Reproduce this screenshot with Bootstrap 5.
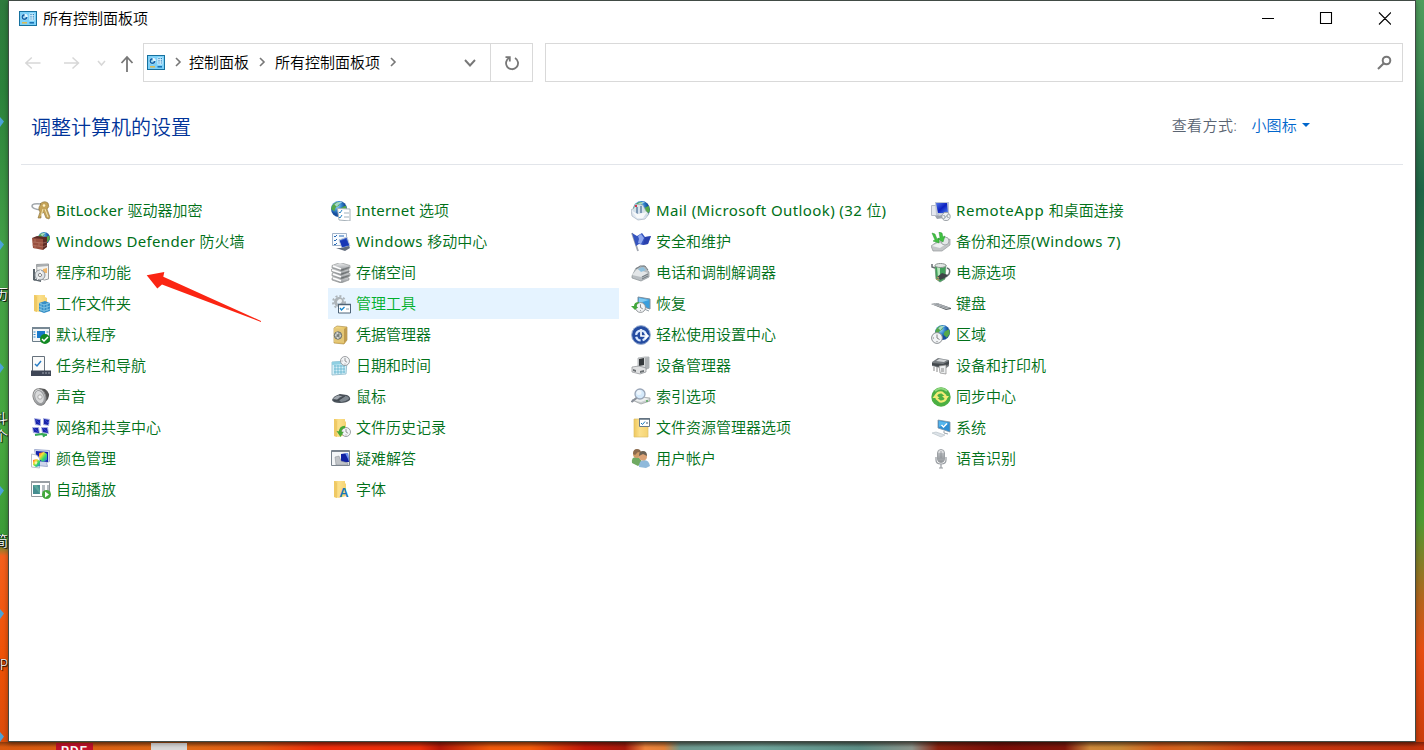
<!DOCTYPE html>
<html lang="zh-CN">
<head>
<meta charset="utf-8">
<title>所有控制面板项</title>
<link href="https://cdn.jsdelivr.net/npm/bootstrap@5.3.0/dist/css/bootstrap.min.css" rel="stylesheet">
<style>
html,body{height:750px;overflow:hidden}
body{font:350 15px/20px "Noto Sans","Noto Sans CJK SC",sans-serif;color:#000;background:linear-gradient(#2f7b3d 0,#2c823b 90px,#43a047 250px,#47a83f 440px,#3b9b38 542px,#f4601c 556px,#ee5206 660px,#d94c0b 750px)}
svg{display:block;flex:none}
.desk-right{left:1415px;top:0;width:9px;height:750px;background:linear-gradient(#4f9d5c 0,#3f8c54 70px,#1f6547 190px,#347b3d 330px,#4d9b32 520px,#b5651c 600px,#e74e12 650px,#c83c0a 750px)}
.desk-bottom{left:0;top:742px;width:1424px;height:8px;background:linear-gradient(rgba(40,20,10,.45),transparent 5px),linear-gradient(90deg,#d9590f 0,#e06a17 190px,#e85a12 260px,#f02c0a 320px,#ee3009 420px,#b51808 440px,#f25b0b 490px,#f45c0a 530px,#c41809 585px,#a61a0c 625px,#f0853c 645px,#e4823a 664px,#6f9a90 680px,#6fa59b 760px,#5d8f86 860px,#8c958c 912px,#8c2310 938px,#7c0e08 1000px,#80160a 1065px,#cf8b3c 1090px,#c98a38 1120px,#d85e1d 1160px,#d2661d 1190px,#d03d12 1250px,#c02f0b 1424px)}
.pdf-tile{left:56px;top:743px;width:37px;height:7px;background:#c3122b;color:#fff;font:700 12px/17px "Liberation Sans",sans-serif;overflow:hidden;text-align:center;letter-spacing:1px}
.doc-tile{left:151px;top:743px;width:36px;height:7px;background:#d9d9d8}
.desk-label{color:#fff;text-shadow:1px 1px 1px #000,-1px 0 1px #000;font-size:14px;line-height:16px;white-space:nowrap;width:8px;overflow:hidden;direction:rtl}
.shortcut{left:0;width:4px;height:10px;background:#4ba3d8;clip-path:polygon(0 0,100% 45%,0 100%)}
.win{margin-left:8px;width:1408px;height:742px;background:#fff;border:1px solid #414b45;box-shadow:0 2px 5px rgba(0,0,0,.35)}
.title-row{height:35px;padding:0 24px 0 10px}
.nav-row{height:51px;padding:7px 12px 0 16px}
.addr,.find{height:39px;border:1px solid #d9d9d9}
.addr{width:390px}
.addr>span{margin-top:-2px}
.refresh{width:42px;height:37px;border-left:1px solid #d9d9d9}
.head-row{height:78px;padding:0 93px 0 10px;border-bottom:1px solid #e2e5ea;margin:0 12px}
h1{font:350 20px/26px "Noto Sans CJK SC",sans-serif;color:#039}
.by{color:#5a6472}.pick{color:#06c}
.panel{margin:30px 0 0 19px}
.colm{width:300px}
.cp{height:31px;width:291px;padding-left:3px;gap:5px;color:#007018;text-decoration:none;white-space:nowrap}
.cp svg{width:20px;height:20px}
.cp>span{margin-top:-2px}
.cp>span>span{font-weight:400}
.cp.on{background:#e5f3ff;color:#00b02c}
.ls-1{letter-spacing:.18px}.ls-2{letter-spacing:.32px}.ls-3{letter-spacing:.4px}.ls-4{letter-spacing:.6px}
.pointer{left:146px;top:270px}
</style>
</head>
<body class="position-relative">
<svg width="0" height="0" class="position-absolute"><defs>
<linearGradient id="gold" x2="1" y2="1"><stop stop-color="#f7e08f"/><stop offset="1" stop-color="#d9a93d"/></linearGradient>
<linearGradient id="fold" x2="1"><stop stop-color="#efc75c"/><stop offset=".4" stop-color="#fbe08c"/><stop offset="1" stop-color="#f5d372"/></linearGradient>
<linearGradient id="steel" x2="0" y2="1"><stop stop-color="#f0f1f2"/><stop offset="1" stop-color="#8c9094"/></linearGradient>
<linearGradient id="screen" x2="1" y2="1"><stop stop-color="#5579e8"/><stop offset=".5" stop-color="#0b1fc0"/><stop offset="1" stop-color="#4f7ff0"/></linearGradient>
<radialGradient id="globe" cx=".35" cy=".3"><stop stop-color="#a8dcf8"/><stop offset=".6" stop-color="#3588cf"/><stop offset="1" stop-color="#164f9e"/></radialGradient>
<linearGradient id="rain" x2="1" y2="1"><stop stop-color="#f33"/><stop offset=".3" stop-color="#fd3"/><stop offset=".6" stop-color="#3d6"/><stop offset="1" stop-color="#36f"/></linearGradient>
<symbol id="panel" viewBox="0 0 18 15"><path fill="#16719f" d="M0 0h18v15H0z"/><path fill="#7cd0f8" d="M1 1h16v13H1z"/><circle cx="5.500" cy="6" r="3.300" fill="#e4f6ff"/><path fill="#1565a8" d="M5.500 6V3A3 3 0 1 0 8.500 6z"/><circle cx="5.300" cy="6.200" r="1.300" fill="#a9dcf5"/><path fill="#e4f6ff" d="M10.500 2.500h5v7h-5z"/><path stroke="#1478ba" stroke-width="1.200" stroke-dasharray="1.200 1" d="M12 3v6.500M14.300 3v6.500"/><path stroke="#e0b94e" stroke-width="1.500" d="M3 11.800h5"/><path stroke="#176db0" stroke-width="1.500" d="M10.500 11.800h4.500"/></symbol>
<symbol id="gl" viewBox="0 0 14 14"><circle cx="7" cy="7" r="7" fill="url(#globe)"/><path fill="#55a84a" d="M1 4q3-4 7-3L7 4 4 6 3 9 0 7zm8 2 4-2 1 4-3 4-3-3z"/><path fill="#c9ecff" opacity=".7" d="M3 3q3-3 7-2Q7 2 5 5z"/></symbol>
<symbol id="clk" viewBox="0 0 12 12"><circle cx="6" cy="6" r="5.400" fill="#f2f4f6" stroke="#8b8f93"/><path d="M6 2.500V6l2.500 1.500M2 6h1M6 9v1" stroke="#666" stroke-width=".8" fill="none"/></symbol>
</defs></svg>

<div class="position-absolute desk-right"></div>
<div class="position-absolute desk-bottom"></div>
<div class="position-absolute pdf-tile">PDF</div>
<div class="position-absolute doc-tile"></div>
<i class="position-absolute shortcut" style="top:117px"></i><i class="position-absolute shortcut" style="top:240px"></i><i class="position-absolute shortcut" style="top:363px"></i><i class="position-absolute shortcut" style="top:486px"></i><i class="position-absolute shortcut" style="top:609px"></i><i class="position-absolute shortcut" style="top:732px"></i>
<div class="position-absolute desk-label" style="top:286px">历</div>
<div class="position-absolute desk-label" style="top:410px">斗</div>
<div class="position-absolute desk-label" style="top:428px">个</div>
<div class="position-absolute desk-label" style="top:533px">简</div>
<div class="position-absolute desk-label" style="top:657px">P</div>

<main class="win position-relative">
<header class="title-row d-flex align-items-center">
<svg width="18" height="15"><use href="#panel"/></svg><span class="me-auto text-nowrap" style="margin:-1px 0 0 6px">所有控制面板项</span>
<svg width="129" height="13" fill="none" stroke="#000" stroke-width="1.100"><path d="M0 6.500h12M58.500.5h11v11h-11zM117 .5l12 12M129 .5l-12 12"/></svg>
</header>
<nav class="nav-row d-flex align-items-start">
<svg width="118" height="39" fill="none" stroke-width="1.500"><g stroke="#d7d7d7"><path d="M15.500 20H.8m6-5.500-6 5.500 6 5.500M39 20h14.500m-6-5.500 6 5.500-6 5.500"/><path d="m73 18 3.500 4 3.500-4"/></g><path stroke="#777" stroke-width="1.800" d="M102 29V14m-5.500 6 5.500-6 5.500 6"/></svg>
<div class="addr d-flex align-items-center">
<svg width="18" height="15" style="margin:0 1px 1px 3px"><use href="#panel"/></svg>
<svg width="23" height="12" fill="none" stroke="#777" stroke-width="1.600" style="margin-bottom:2px"><path d="m10 2 4 4-4 4"/></svg><span>控制面板</span>
<svg width="26" height="12" fill="none" stroke="#777" stroke-width="1.600" style="margin-bottom:2px"><path d="m11 2 4 4-4 4"/></svg><span>所有控制面板项</span>
<svg width="26" height="12" fill="none" stroke="#777" stroke-width="1.600" style="margin-bottom:2px"><path d="m11 2 4 4-4 4"/></svg>
<svg class="ms-auto" style="margin-right:14px" width="12" height="8" fill="none" stroke="#777" stroke-width="1.900"><path d="m1 1 5 5.500L11 1"/></svg>
<div class="refresh d-flex align-items-center justify-content-center"><svg width="16" height="16" fill="none" stroke="#777" stroke-width="1.800"><path d="M5.500 2.800A6 6 0 1 0 11 3"/><path d="M1.500 2.200h4.300v4.300"/></svg></div>
</div>
<div class="find flex-grow-1 d-flex align-items-center justify-content-end" style="margin-left:12px"><svg width="15" height="15" fill="none" stroke="#777" stroke-width="2" style="margin-right:10px"><circle cx="9.500" cy="5.500" r="3.800"/><path d="M6.800 8.200 1 14"/></svg></div>
</nav>
<div class="head-row d-flex align-items-center">
<h1 class="m-0 me-auto" style="padding-top:2px">调整计算机的设置</h1><span class="by" style="margin-top:-2px;letter-spacing:.4px">查看方式:</span><span class="pick" style="margin:-2px 0 0 14px;letter-spacing:.2px">小图标</span><svg width="8" height="4" style="margin:-1px 0 0 5px" fill="#06c"><path d="M0 0h8L4 4z"/></svg>
</div>
<section class="panel d-flex">
<div class="colm">
<a class="cp d-flex align-items-center"><svg viewBox="0 0 20 20"><path d="M10 3Q1 2 1 5t9 4" fill="none" stroke="#a4a9ad" stroke-width="1.600"/><path fill="#c5a358" stroke="#86703c" stroke-width=".6" d="M9 3q4-4 8-1 2 4-1 6l3 8-1 2-3-1-2-5-1-1-2 3 0 3-3 0 2-6-1-2q-1-3 2-6z"/><circle cx="13" cy="4.500" r="1.300" fill="#fff3c8"/><path d="m12 8-2 7m4-7 3 8" stroke="#f1e3b0"/></svg><span><span class="ls-1">BitLocker </span>驱动器加密</span></a>
<a class="cp d-flex align-items-center"><svg viewBox="0 0 20 20"><use href="#gl" x="7" y="0" width="12" height="12"/><path fill="#99503f" d="m1 6 11 0v12L2 16z"/><path fill="#5d2b25" d="m12 7 4-2v10l-4 3zM1 6l5-2 10 1-4 2z"/><path d="m1 10 11 1 4-1M1 13l11 2 4-2M4 7v3m4 1v3m-4 0v3" fill="none" stroke="#c08a78" stroke-width=".5"/></svg><span><span class="ls-2">Windows Defender </span>防火墙</span></a>
<a class="cp d-flex align-items-center"><svg viewBox="0 0 20 20"><path fill="#f2f2f0" stroke="#999c9e" d="M5.500 1.500 17.500 1v15l-4 1-7-2z"/><path fill="#a9adb0" d="m6 2 11-1v2L6 4z"/><path fill="#efb66a" d="m12 6 4-1v5h-4z"/><path fill="#59636a" d="m2 6 2 0v12l-2-1zm0 9 8 2v2l-8-2z"/><circle cx="9" cy="12" r="5" fill="#dfe3e6" stroke="#8c9297"/><circle cx="9" cy="12" r="1.600" fill="#fff" stroke="#888"/><path d="m9 7 2 4m-5 6 2-3" stroke="#fff"/></svg><span>程序和功能</span></a>
<a class="cp d-flex align-items-center"><svg viewBox="0 0 20 20"><path fill="url(#fold)" d="M3 1h11v2l2 1v12l-7 2-6-1z"/><path fill="#efc964" d="m3 1 3 2v15l-3-1z"/><path fill="#368fc8" d="m8 9 6-2 5 2v8l-6 2-5-2z"/><path d="m8 9 5 2 6-2M8 12l5 2 6-2M8 15l5 2 6-2m-6-5v8m-3-9v8m6-8v8" fill="none" stroke="#9fdaef" stroke-width=".6"/></svg><span>工作文件夹</span></a>
<a class="cp d-flex align-items-center"><svg viewBox="0 0 20 20"><path fill="#f4f6f7" stroke="#6b7d89" d="M1.500 2.500h17v14h-17z"/><path fill="#778894" d="M1 2h18v2H1z"/><path fill="#1979ca" d="M6 6h8v7H6z"/><path stroke="#328dca" d="M2.500 7h2m-2 2.500h2m-2 2.500h2M15.500 7h2"/><circle cx="14" cy="14" r="5" fill="#128a23"/><path d="m11 14 2 2 4-4" fill="none" stroke="#fff" stroke-width="1.500"/></svg><span>默认程序</span></a>
<a class="cp d-flex align-items-center"><svg viewBox="0 0 20 20"><path fill="#fafafa" stroke="#66717c" d="M1.500.5h12v16h-12z"/><path d="m4 8 2 2 4-5" fill="none" stroke="#287cc4" stroke-width="1.500"/><path fill="#3e4656" d="M0 14.500h20V20H0z"/><path stroke="#9da4af" stroke-width="1.200" stroke-dasharray="2 1" d="M11 17h8"/></svg><span>任务栏和导航</span></a>
<a class="cp d-flex align-items-center"><svg viewBox="0 0 20 20"><path fill="#555" d="m8 1 6 1q6 4 3 10l-5 6z"/><ellipse cx="8.500" cy="10" rx="6.300" ry="8.500" transform="rotate(-18 8.500 10)" fill="url(#steel)" stroke="#888"/><ellipse cx="8.500" cy="10" rx="4.600" ry="6.700" transform="rotate(-18 8.500 10)" fill="#d9dadb" stroke="#9a9c9e"/><circle cx="9" cy="10" r="2.200" fill="#f2f2f2" stroke="#aaa"/></svg><span>声音</span></a>
<a class="cp d-flex align-items-center"><svg viewBox="0 0 20 20"><path fill="#a9afe2" d="m3 0 7 1 0 7-6-1zm9 0 7 1-1 7-6-1zM1 9l7 0 1 7-7-1zm9 0 7 0 1 7-7-1z"/><path fill="#1924a9" d="m4 1 5 1 0 5-4-1zm9 0 5 1-1 5-4-1zM2 10l5 0 1 5-5-1zm9 0 5 0 1 5-5-1z"/><path stroke="#35a956" stroke-width="2" fill="none" d="m4 17 7-1 5 1m-4-1 1 3"/><path d="m5 2 4 4m5-4 4 4M3 10l4 4m5-4 4 4" stroke="#3548d6" stroke-width=".8"/></svg><span>网络和共享中心</span></a>
<a class="cp d-flex align-items-center"><svg viewBox="0 0 20 20"><path fill="#ced4ec" stroke="#a3aed0" d="m3.500.5 15 1v11l-3 1 1 4-10-1z"/><path fill="#1524ab" d="m5 2 12 1v10L5 12z"/><path fill="url(#rain)" d="m8 4 5-1 3 2v6l-4 2-4-3z"/><path fill="#fff" stroke="#b9c1cb" d="m.5 5 5 1 3 3v10l-8-1z"/><path fill="url(#rain)" d="m2 11 4-1 3 2v5l-4 1-3-2z"/><path fill="#f7f0ae" d="m5 12 1.500 1.500L5 16l-1.500-2z"/></svg><span>颜色管理</span></a>
<a class="cp d-flex align-items-center"><svg viewBox="0 0 20 20"><path fill="#fff" stroke="#90969a" d="M.5 1.500h18v15H.5z"/><path fill="#999fa4" d="M0 1h19v2H0z"/><path fill="#468d90" d="M2 5h7v9H2z"/><path fill="#68b9a4" d="m2 5 4 0 3 6v3z" opacity=".6"/><path fill="#b6bdc2" d="M11 5h3v8h-3zm5 0h2v8h-2z"/><circle cx="15.500" cy="14.500" r="4.500" fill="#43a83c"/><path fill="#fff" d="m14 11.500 4 3-4 3z"/></svg><span>自动播放</span></a>
</div>
<div class="colm">
<a class="cp d-flex align-items-center"><svg viewBox="0 0 20 20"><use href="#gl" width="16" height="16"/><path fill="#fff" stroke="#a7b1b9" d="M6.500 7.500 19 8v12l-11-1z"/><path stroke="#2784c4" fill="none" d="m8 11 1 1 2-3m-3 7 1 1 2-3"/><path stroke="#9fb1bd" d="M13 12h5m-5 4h5"/></svg><span><span class="ls-1">Internet </span>选项</span></a>
<a class="cp d-flex align-items-center"><svg viewBox="0 0 20 20"><path fill="#f7fbff" stroke="#a1b3c9" d="M1.500 1.500h14v12h-14z"/><path fill="none" stroke="#2768b4" d="m3 4 1 1 2-2m2 1h5M3 8l1 1 2-2m2 1h3m-8 4 1 1 2-2"/><path fill="#3c64c9" stroke="#c6cfdd" d="m8 8 8-3 3 9-8 2z"/><path fill="#1837b5" d="m9 9 6-2 3 6-7 2z"/><path fill="#606b7c" d="m5 16 5 0 8-2 1 2-5 3z"/></svg><span><span class="ls-3">Windows </span>移动中心</span></a>
<a class="cp d-flex align-items-center"><svg viewBox="0 0 20 20" stroke="#888b8c" stroke-width=".6"><path fill="url(#steel)" d="m1 15 8-3 9 3v2l-8 3-9-3z"/><path fill="url(#steel)" d="m1 10.500 8-3 10 3v2.500l-8 3-10-3z"/><path fill="url(#steel)" d="m0 6.500 9-3 9 3V9l-8 3-9-3z"/><path fill="url(#steel)" d="m1 2.500 8-3 10 3V5l-8 3-10-3z"/><path stroke="#fff" stroke-width="1.500" d="m2 3 8 3m-9 1 9 3m-8 1 8 3m-8 1 8 3"/><path fill="#5f6467" d="M10 6.500 18 4v1l-8 3zm0 4L18 8v1l-8 3zm0 4 8-2.500v1L10 16z"/></svg><span>存储空间</span></a>
<a class="cp on d-flex align-items-center"><svg viewBox="0 0 20 20"><g fill="none" stroke="#adb4b9"><circle cx="8" cy="8" r="3.500" stroke-width="3"/><circle cx="8" cy="8" r="6" stroke-width="2" stroke-dasharray="2 2"/></g><circle cx="9" cy="7" r="2" fill="#eef2f5"/><path fill="#fff" stroke="#4e6478" d="M7.500 10.500h12v8.500h-12z"/><path stroke="#4f6375" stroke-width="1.500" d="M7 10.500h13"/><path d="m9 14 1.500 2 3-3" fill="none" stroke="#1887cd" stroke-width="1.300"/><path stroke="#8ea4b3" d="M15 15h3"/></svg><span>管理工具</span></a>
<a class="cp d-flex align-items-center"><svg viewBox="0 0 20 20"><path fill="url(#gold)" stroke="#b0924f" stroke-width=".7" d="m3 3 3-2 10 1v13l-3 4-10-1z"/><path fill="#e4c777" d="m3 3 10 1v14L3 17z"/><circle cx="7" cy="10.500" r="3.700" fill="#a9ada5" stroke="#6b706d"/><path stroke="#eee" d="m4 10 6 1m-4-4 1 7"/><circle cx="7" cy="10.500" r="1.500" fill="#777c78"/><path fill="#c09c50" d="m13 4 3-2v13l-3 3z"/></svg><span>凭据管理器</span></a>
<a class="cp d-flex align-items-center"><svg viewBox="0 0 20 20"><path fill="#d5eff8" stroke="#9cc4d3" d="m1 6 15-1-1 13-14 1z"/><path fill="#8fcfe2" d="m1 6 13-1v3L1 9z"/><path stroke="#58afca" stroke-width=".7" d="M3 10h11M3 13h11M3 16h11M4 9v9m3-9v9m3-9v9m3-9v8"/><use href="#clk" x="9" y="0" width="10" height="10"/></svg><span>日期和时间</span></a>
<a class="cp d-flex align-items-center"><svg viewBox="0 0 20 20"><path fill="#4b535b" d="M1 13q1-4 8-6l7 1q4 2 3 5-3 3-10 3-7 0-8-3z"/><path fill="#a0a7ae" d="M2 12q2-3 7-4l3 1q-4 1-6 4z"/><path fill="#7f8890" d="m8 13 6-4q4 0 4 3-4 3-8 3z"/><path stroke="#333940" stroke-width=".7" fill="none" d="m3 13 5 0 6-4m-6-1 4 1"/></svg><span>鼠标</span></a>
<a class="cp d-flex align-items-center"><svg viewBox="0 0 20 20"><path fill="url(#fold)" d="M3 1h11v2l1 1v13l-7 2-5-1z"/><path fill="#efc964" d="m3 1 3 2v16l-3-1z"/><use href="#clk" x="10" y="9" width="10" height="10"/><path fill="none" stroke="#47a937" stroke-width="2.500" d="M14 9q-5 0-5 6"/><path fill="#47a937" d="m5.500 13 7 1-3 5z"/></svg><span>文件历史记录</span></a>
<a class="cp d-flex align-items-center"><svg viewBox="0 0 20 20"><path fill="#f3f5f7" stroke="#78828d" d="M.5 1.500h18v15H.5z"/><path stroke="#7c858f" d="M1 2.500h17"/><path fill="#1021a3" d="m10 5 7-1 1 9-8 1z"/><path fill="#6b92ef" d="m14 4 3 0 1 8z"/><path fill="#c0c3c7" stroke="#858a90" stroke-width=".5" d="m4 8 4-1 2 5 7 2v2H5z"/></svg><span>疑难解答</span></a>
<a class="cp d-flex align-items-center"><svg viewBox="0 0 20 20"><path fill="url(#fold)" d="M3 1h11v2l1 1v12l-7 2-5-1z"/><path fill="#efc964" d="m3 1 3 2v15l-3-1z"/><text x="8.300" y="17" font-family="Liberation Sans" font-size="13" font-weight="bold" fill="#1778b6">A</text></svg><span>字体</span></a>
</div>
<div class="colm">
<a class="cp d-flex align-items-center"><svg viewBox="0 0 20 20"><use href="#gl" x="2" width="17" height="17"/><path fill="#e0e8f1" stroke="#8c9cac" stroke-width=".6" d="m0 9 3-2 1-4 8 1 3 6 3 3-4 5-7 1-6-4z" opacity=".92"/><path fill="#7e99b5" d="M5 6h2v7H5zm4-1h2v7H9z"/><path fill="#f7f9fa" d="m1 10 6 3 9-2-4 6-6 0z"/><path fill="#d2364f" d="M4 4h2v2H4z"/></svg><span><span class="ls-3">Mail (Microsoft Outlook) (32 </span>位<span>)</span></span></a>
<a class="cp d-flex align-items-center"><svg viewBox="0 0 20 20"><path d="m1 1 6 18" stroke="#a1a6b0" stroke-width="1.800"/><path fill="#3554bf" d="m1 1 5 3 5-3 3 4 6-1-3 8-5 1-4-1-3 2z"/><path fill="#90a7ee" d="m7 4 3-2 3 4-3 6-3-1 1-4z"/><path fill="#2336a3" d="m14 5 6-1-3 8-5 1z" opacity=".6"/></svg><span>安全和维护</span></a>
<a class="cp d-flex align-items-center"><svg viewBox="0 0 20 20"><path fill="#b8bdc1" stroke="#8a9094" stroke-width=".7" d="m1 13 4-8 8-2 5 6v5l-8 4-9-3z"/><path fill="#e3e6e8" d="m1 12 5-6 11 4-7 4z"/><path fill="#8fc1de" d="m7 6 5-2 3 3-5 2z"/><path fill="none" stroke="#6f787e" d="m5 6 4-3 5 0 3 4m-6 7 6-3m-6 5 6-3"/></svg><span>电话和调制解调器</span></a>
<a class="cp d-flex align-items-center"><svg viewBox="0 0 20 20"><path fill="#3b9fdd" stroke="#7f909f" d="m7 3 12 2v10L7 11z"/><path fill="#81caf2" d="m8 4 10 2-10 3z"/><path stroke="#919ca4" d="m13 15 5 2"/><use href="#clk" x="4" y="8" width="11" height="11"/><path fill="#42a83b" d="M8 8Q3 8 3 12H0l4 4 3-3H6q-1-3 2-4z"/></svg><span>恢复</span></a>
<a class="cp d-flex align-items-center"><svg viewBox="0 0 20 20"><circle cx="10" cy="10" r="9.400" fill="#254ca1" stroke="#9fb3d4"/><circle cx="10" cy="10.500" r="5" fill="none" stroke="#d9e9ff" stroke-width="2.200" stroke-dasharray="6 2"/><path stroke="#fff" stroke-width="1.700" fill="none" d="M10 4v7h7m-3-3 3 3-3 3"/></svg><span>轻松使用设置中心</span></a>
<a class="cp d-flex align-items-center"><svg viewBox="0 0 20 20"><path fill="#d6d8d9" stroke="#9a9da0" stroke-width=".7" d="m7 2 7-1 4 0v11l-7 3-4-3z"/><path fill="#34383b" d="m8 3 5-1v7l-5 1z"/><path fill="#aeb2b5" d="m14 2 4-1v11l-4 2z"/><path fill="#e0e1e2" stroke="#898d90" stroke-width=".7" d="m1 11 7-1 7 2v4l-6 2-8-2z"/><path fill="#6a6f72" d="m2 13 3 1v2l-3-1zm7 2 4-1v2l-4 1z"/></svg><span>设备管理器</span></a>
<a class="cp d-flex align-items-center"><svg viewBox="0 0 20 20"><path fill="#c9cecf" stroke="#999d9f" stroke-width=".7" d="m1 13 10-3 8 1v3l-9 3z"/><path fill="#edf0f0" d="m1 13 9-3 8 2-8 3z"/><circle cx="9" cy="7" r="5" fill="#d4e9fa" stroke="#9aa6b8" stroke-width="1.300"/><path d="m5.500 11-5 4" stroke="#898f99" stroke-width="2.200"/><circle cx="8" cy="5.500" r="2.500" fill="#fff" opacity=".6"/><circle cx="16" cy="14" r="1" fill="#55a858"/></svg><span>索引选项</span></a>
<a class="cp d-flex align-items-center"><svg viewBox="0 0 20 20"><path fill="url(#fold)" stroke="#dcc06a" stroke-width=".7" d="M3 1h13l1 2v16H3z"/><path fill="#fff" stroke="#687a88" d="M8.500.5h10v8h-10z"/><path stroke="#60717f" stroke-width="1.500" d="M8 1h11"/><path d="m10 5 1.500 1.500L14 3.500" stroke="#1778bb" fill="none"/><path d="M15 5h2" stroke="#456"/></svg><span>文件资源管理器选项</span></a>
<a class="cp d-flex align-items-center"><svg viewBox="0 0 20 20"><path fill="#6fa961" d="M1 14q-1-6 4-6t6 6l-4 3z"/><circle cx="6" cy="5" r="4" fill="#cf9c68"/><path fill="#8b6a4c" d="M2 5q0-5 4-5t4 4l-3-1-3 3z"/><path fill="#8fb9db" d="M8 18q0-7 5-7t6 6l-4 2z"/><circle cx="12" cy="7.500" r="4" fill="#dba276"/><path fill="#6b6052" d="M8 7q0-5 4-5t4 5l-4-2z"/></svg><span>用户帐户</span></a>
</div>
<div class="colm">
<a class="cp d-flex align-items-center"><svg viewBox="0 0 20 20"><path fill="#e5e8ef" stroke="#b4bac7" d="M.5 4.500h7v10h-7z"/><path fill="#bdc5d4" d="m4 1 14 0 0 12-13 1z"/><path fill="url(#screen)" d="m5 2 11 0 1 10-10 0z"/><path fill="#9ca3ad" d="m4 15 7-1 2 3-7 1z"/><circle cx="15" cy="15.500" r="4.200" fill="#eef0f2" stroke="#9a9fa4"/><path fill="none" stroke="#6a7b82" stroke-width=".9" d="m12.500 14 2 2-2 2m5-5-2 2 2 2"/></svg><span><span class="ls-4">RemoteApp </span>和桌面连接</span></a>
<a class="cp d-flex align-items-center"><svg viewBox="0 0 20 20"><path fill="#c3c6c8" stroke="#95999c" stroke-width=".7" d="m0 14 7-5h8l4-2v6l-8 6H2z"/><path fill="#eef0f1" d="m1 14 6-3 8 1-6 4z"/><circle cx="14" cy="9" r="4" fill="#e4e7e8" stroke="#a4a9ac"/><path fill="#42c042" stroke="#2c9a35" stroke-width=".5" d="m1 1 3 1 2 5 2-1 0 5-6-2 2-1zm7-1 3 1 1 4 2-1-2 6-5-3 2-1z"/></svg><span>备份和还原<span class="ls-3">(Windows 7)</span></span></a>
<a class="cp d-flex align-items-center"><svg viewBox="0 0 20 20"><path fill="none" stroke="#666c70" stroke-width="1.500" d="M1 1v3l3 1m12 0q4 1 2 6l-3 3"/><path fill="#42a15b" stroke="#648a6e" stroke-width=".7" d="m4 3 11-1-1 14-5 3-4-3z"/><path fill="#b4e8ba" d="m6 4 3-1 0 14-2-2z"/><ellipse cx="9.500" cy="2.500" rx="5.500" ry="2" fill="#e2e7e5" stroke="#89918d"/><path fill="#3f4448" d="m6 14 5-4 6 2-3 3-5 2z"/><path stroke="#b89362" stroke-width="1.300" d="m5 16 3 1m-2-3 2 1"/></svg><span>电源选项</span></a>
<a class="cp d-flex align-items-center"><svg viewBox="0 0 20 20"><path fill="#5b6063" d="m0 10 6-1 14 5v1l-5 1z"/><path fill="#c6cacd" d="m0 10 6-1 13 5-4 1z"/><path stroke="#8b9195" stroke-width=".6" d="m3 10 12 4M5 9.500l12 4M5 11l3-1m1 3 3-1m1 2 3-1"/></svg><span>键盘</span></a>
<a class="cp d-flex align-items-center"><svg viewBox="0 0 20 20"><use href="#gl" x="4" y="0" width="15" height="15"/><use href="#clk" x="0" y="7" width="12" height="12"/></svg><span>区域</span></a>
<a class="cp d-flex align-items-center"><svg viewBox="0 0 20 20"><path fill="#777c80" d="m1 6 6-4 11 2v6l-4 3-13-3z"/><path fill="#d4d7d9" d="m5 5 3-2 8 1-3 2z"/><path fill="#44494d" d="m1 7 11 1 6-3v3l-6 4-11-3z"/><path fill="#eceeef" stroke="#888" stroke-width=".7" d="m8 10 7-1v9l-6-1z"/><path stroke="#888" d="M3 11v4m3-4v5m4-3 3 0m-3 2h3"/></svg><span>设备和打印机</span></a>
<a class="cp d-flex align-items-center"><svg viewBox="0 0 20 20"><circle cx="10" cy="10" r="9.700" fill="#4caf42"/><path d="M4 4q6-5 12 0" stroke="#8ed77e" stroke-width="2" fill="none"/><path d="M5 9q1-4 6-3.500l4 3.500M15 11q-1 4-6 3.500L5 11" stroke="#f2eb76" stroke-width="2.200" fill="none"/><path fill="#f2eb76" d="m11 9 7 0-3 4zM1.500 11l7 0-4-4z"/></svg><span>同步中心</span></a>
<a class="cp d-flex align-items-center"><svg viewBox="0 0 20 20"><path fill="#2f8ed2" stroke="#8395a4" stroke-width=".8" d="m7 2 12 2v10L7 10z"/><path fill="#56b6ed" d="m8 3 10 2-10 4z"/><path d="m10.500 7 2 2 3.500-3.500" fill="none" stroke="#fff" stroke-width="1.500"/><path fill="none" stroke="#9ca4ab" d="m13 13 0 2 4 1"/><path fill="#dce2e7" stroke="#b4bdc5" stroke-width=".6" d="m1 15 4-1 9 3-4 2z"/></svg><span>系统</span></a>
<a class="cp d-flex align-items-center"><svg viewBox="0 0 20 20"><rect x="6.500" y=".5" width="7" height="13" rx="3.500" fill="url(#steel)" stroke="#9ca0a4"/><path fill="none" stroke="#979ba0" stroke-width="1.200" d="M5 8v3q0 4 5 4t5-4V8m-5 7v4m-2 0h4"/><path stroke="#8b9096" stroke-width=".8" d="M7 5h6M7 7h6M7 9h6M10 2v7"/></svg><span>语音识别</span></a>
</div>
</section>
</main>
<svg class="position-absolute pointer" width="117" height="54" fill="#fb2513"><path d="M.7 5.300 18.300 2l-1 4.700L115 51l0 1L16 14.500l-4.700 4z"/></svg>
<script src="https://cdn.jsdelivr.net/npm/bootstrap@5.3.0/dist/js/bootstrap.bundle.min.js"></script>
</body>
</html>
